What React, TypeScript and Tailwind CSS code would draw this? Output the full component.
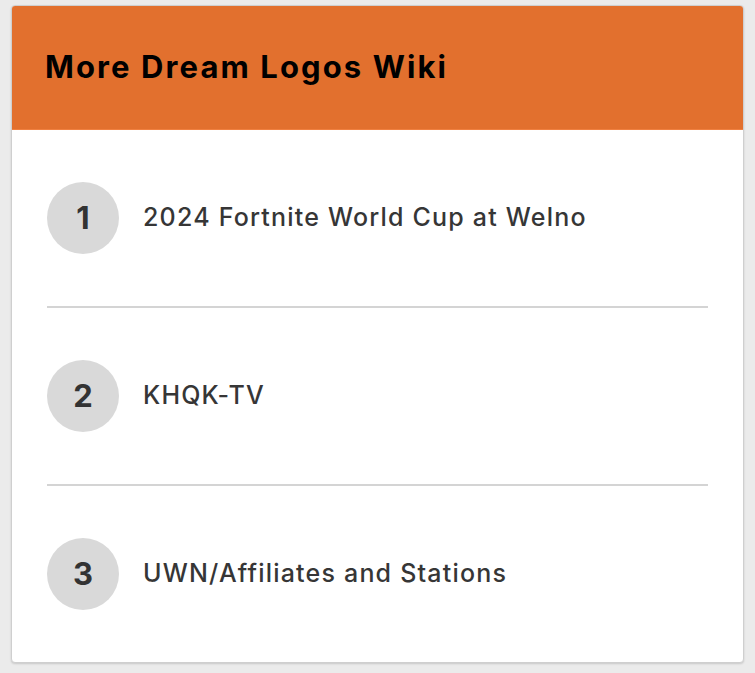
const items = ['2024 Fortnite World Cup at Welno', 'KHQK-TV', 'UWN/Affiliates and Stations'];

export default function App() {
  return (
    <div className="min-h-[673px] bg-[#ebebeb] pt-[5px] pl-[11px] pr-[11px] pb-[11px] font-['Inter',sans-serif]">
      <div className="w-[733px] border border-[#cfcfcf] rounded-[4px] bg-white overflow-hidden shadow-[0_1px_2px_rgba(0,0,0,0.15)]">
        <div className="h-[124px] bg-[#e2702e] border-b border-[#f08040] flex items-center pl-[33px]">
          <h2 className="text-[31px] font-bold text-black tracking-[2.1px]">More Dream Logos Wiki</h2>
        </div>
        <div className="px-[35px]">
          {items.map((title, i) => (
            <div key={title} className={`flex items-center gap-[24px] py-[52px] ${i < items.length - 1 ? 'border-b-2 border-[#d4d4d4]' : ''}`}>
              <div className="w-[72px] h-[72px] rounded-full bg-[#d9d9d9] flex items-center justify-center text-[31px] font-bold text-[#333]">
                {i + 1}
              </div>
              <span className="text-[25px] font-medium text-[#363636] tracking-[1.2px]">{title}</span>
            </div>
          ))}
        </div>
      </div>
    </div>
  );
}
